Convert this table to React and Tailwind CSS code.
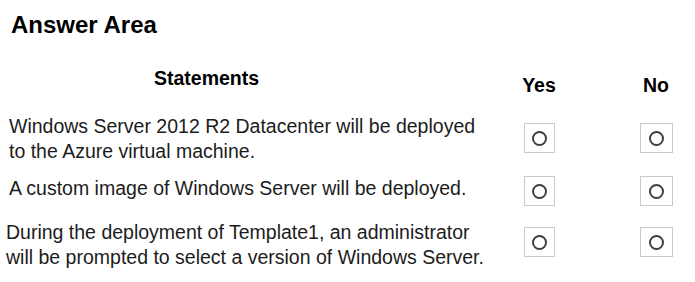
const rows = [
  {
    lines: ["Windows Server 2012 R2 Datacenter will be deployed", "to the Azure virtual machine."],
    rowClass: "mt-[17px]",
    textClass: "pl-[9px]",
    boxClass: "mt-[9px]",
  },
  {
    lines: ["A custom image of Windows Server will be deployed."],
    rowClass: "mt-[12px]",
    textClass: "pl-[9px]",
    boxClass: "mt-0",
  },
  {
    lines: ["During the deployment of Template1, an administrator", "will be prompted to select a version of Windows Server."],
    rowClass: "mt-[14px]",
    textClass: "pl-[6px]",
    boxClass: "mt-[7px]",
  },
];

const Radio = ({ className }) => (
  <div className={`w-[31px] h-[30px] border border-[#cacaca] bg-white flex items-center justify-center ${className}`}>
    <div className="w-[15px] h-[15px] rounded-full border-2 border-[#3f3f3f]" />
  </div>
);

const App = () => {
  return (
    <div className="w-[695px] h-[282px] bg-white overflow-hidden font-['Liberation_Sans',Arial,sans-serif]">
      <h1 className="pt-[11px] pl-[11px] text-[24px] leading-[28px] font-bold text-black">Answer Area</h1>

      <div className="flex items-start mt-[27px]">
        <div className="w-[504px] pl-[154px] text-[19.5px] leading-[24px] font-bold text-black">Statements</div>
        <div className="w-[70px] pt-[7px] text-center text-[19.5px] leading-[24px] font-bold text-black">Yes</div>
        <div className="w-[47px]" />
        <div className="w-[70px] pt-[7px] text-center text-[19.5px] leading-[24px] font-bold text-black">No</div>
      </div>

      {rows.map((row, i) => (
        <div key={i} className={`flex items-start ${row.rowClass}`}>
          <div className={`w-[504px] text-[19.5px] leading-[25px] text-[#1c1c1c] whitespace-nowrap ${row.textClass}`}>
            {row.lines.map((line, j) => (
              <div key={j}>{line}</div>
            ))}
          </div>
          <div className="w-[70px] flex justify-center">
            <Radio className={row.boxClass} />
          </div>
          <div className="w-[47px]" />
          <div className="w-[70px] flex justify-center">
            <Radio className={`${row.boxClass} w-[33px]`} />
          </div>
        </div>
      ))}
    </div>
  );
};

export default App;
